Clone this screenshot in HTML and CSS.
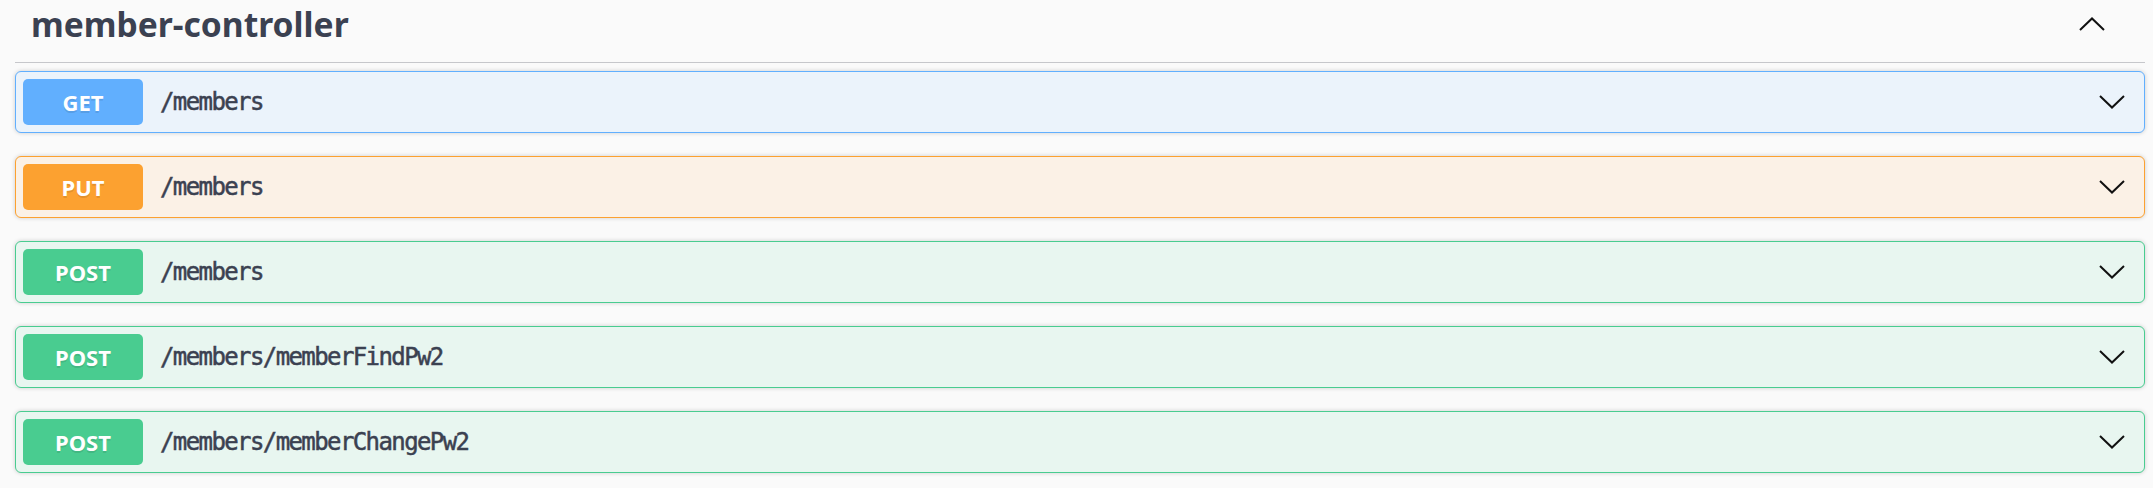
FILE: index.html
```html
<!DOCTYPE html>
<html lang="en">
<head>
<meta charset="utf-8">
<title>member-controller</title>
<link rel="stylesheet" href="styles.css">
</head>
<body>
<section class="tag-section">
  <div class="tag-header">
    <h3 class="tag-title">member-controller</h3>
    <svg class="arrow arrow-up" width="26" height="14" viewBox="0 0 26 14" aria-hidden="true"><polyline points="1,13 13,1.5 25,13"/></svg>
  </div>
  <div class="ops">
    <div class="opblock get">
      <span class="method">GET</span>
      <span class="path">/members</span>
      <svg class="arrow" width="26" height="14" viewBox="0 0 26 14" aria-hidden="true"><polyline points="1,1 13,12.5 25,1"/></svg>
    </div>
    <div class="opblock put">
      <span class="method">PUT</span>
      <span class="path">/members</span>
      <svg class="arrow" width="26" height="14" viewBox="0 0 26 14" aria-hidden="true"><polyline points="1,1 13,12.5 25,1"/></svg>
    </div>
    <div class="opblock post">
      <span class="method">POST</span>
      <span class="path">/members</span>
      <svg class="arrow" width="26" height="14" viewBox="0 0 26 14" aria-hidden="true"><polyline points="1,1 13,12.5 25,1"/></svg>
    </div>
    <div class="opblock post">
      <span class="method">POST</span>
      <span class="path">/members/memberFindPw2</span>
      <svg class="arrow" width="26" height="14" viewBox="0 0 26 14" aria-hidden="true"><polyline points="1,1 13,12.5 25,1"/></svg>
    </div>
    <div class="opblock post">
      <span class="method">POST</span>
      <span class="path">/members/memberChangePw2</span>
      <svg class="arrow" width="26" height="14" viewBox="0 0 26 14" aria-hidden="true"><polyline points="1,1 13,12.5 25,1"/></svg>
    </div>
  </div>
</section>
</body>
</html>
```
FILE: styles.css
```css
html, body {
  margin: 0;
  padding: 0;
  background: #fafafa;
}

.tag-section {
  padding: 0 8px 0 15px;
}

.tag-header {
  display: flex;
  align-items: center;
  justify-content: space-between;
  height: 62px;
  border-bottom: 1px solid #c6c7cb;
  padding: 0 40px 0 16px;
}

.tag-title {
  margin: 0;
  font-family: "Noto Sans", "Open Sans", sans-serif;
  font-weight: 700;
  font-size: 33.6px;
  color: #3b4151;
  line-height: 1;
  position: relative;
  top: -6px;
}

.arrow {
  display: block;
  flex: none;
  fill: none;
  stroke: #111;
  stroke-width: 2;
}

.arrow-up {
  position: relative;
  top: -7px;
}

.ops {
  padding-top: 8px;
}

.opblock {
  display: flex;
  align-items: center;
  height: 62px;
  box-sizing: border-box;
  padding: 0 19px 0 7px;
  margin-bottom: 23px;
  border: 1px solid;
  border-radius: 6px;
  box-shadow: 0 0 4px rgba(0, 0, 0, 0.19);
}

.opblock.get {
  background: #ebf3fb;
  border-color: #61affe;
}

.opblock.put {
  background: #fbf1e6;
  border-color: #fca130;
}

.opblock.post {
  background: #e8f6f0;
  border-color: #49cc90;
}

.method {
  flex: none;
  width: 120px;
  height: 46px;
  display: flex;
  align-items: center;
  justify-content: center;
  border-radius: 5px;
  color: #fff;
  font-family: "Noto Sans", "Open Sans", sans-serif;
  font-weight: 700;
  font-size: 22px;
  text-shadow: 0 1.5px 0 rgba(0, 0, 0, 0.1);
}

.get .method { background: #61affe; }
.put .method { background: #fca130; }
.post .method { background: #49cc90; }

.path {
  flex: 1;
  padding: 0 15px 0 17px;
  font-family: "DejaVu Sans Mono", "Liberation Mono", monospace;
  font-weight: 400;
  font-size: 24px;
  letter-spacing: -1.6px;
  -webkit-text-stroke: 0.5px #3b4151;
  color: #3b4151;
}
```
